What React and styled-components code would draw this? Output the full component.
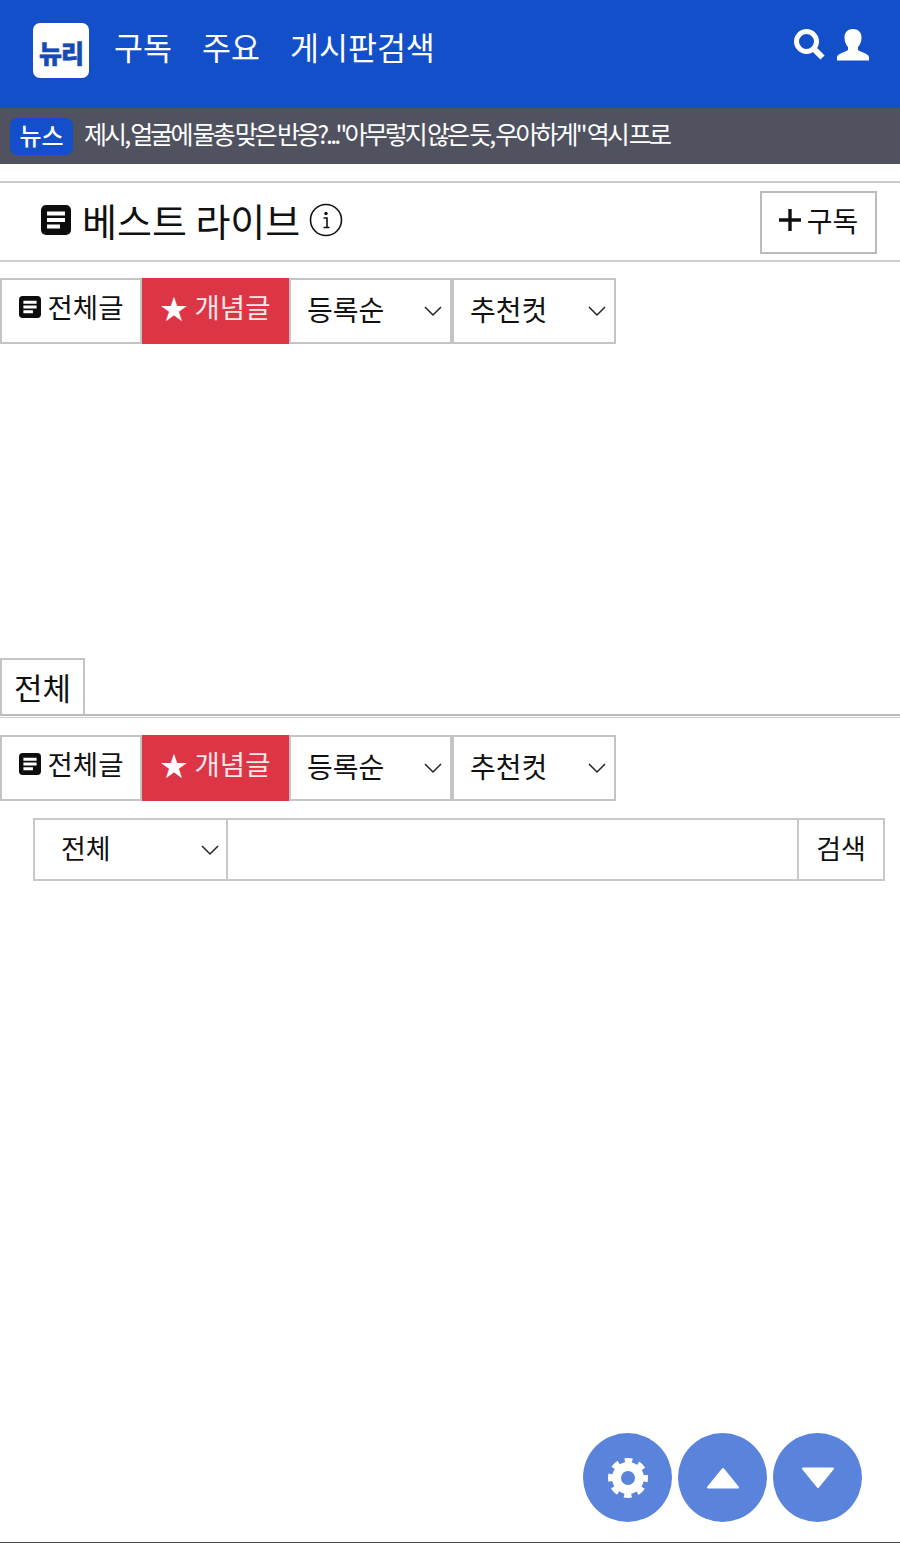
import React from 'react';
import styled, { createGlobalStyle } from 'styled-components';

const GlobalStyle = createGlobalStyle`
  html, body {
    margin: 0;
    padding: 0;
    background: #fff;
  }
  * {
    box-sizing: border-box;
  }
  body {
    font-family: "Noto Sans CJK KR", "Noto Sans", sans-serif;
    color: #111;
  }
`;

const ListIcon = ({ size }) => (
  <svg width={size} height={size} viewBox="0 0 30 30" style={{ flexShrink: 0 }}>
    <rect width="30" height="30" rx="5" fill="#0d0d0d" />
    <path d="M6 6.500h18v4H6zM6 13h18v4H6zM6 19.500h13v4H6z" fill="#fff" />
  </svg>
);

const Chevron = () => (
  <svg width="20" height="12" viewBox="0 0 20 12">
    <path d="M2 2l8 8 8-8" fill="none" stroke="#222" strokeWidth="1.500" />
  </svg>
);

const GearIcon = () => (
  <svg width="42" height="42" viewBox="0 0 42 42">
    <circle cx="21" cy="21" r="11.500" fill="none" stroke="#fff" strokeWidth="9" />
    <circle
      cx="21"
      cy="21"
      r="17.500"
      fill="none"
      stroke="#fff"
      strokeWidth="5"
      strokeDasharray="7.500 6.244"
      strokeDashoffset="3.750"
    />
  </svg>
);

const Tabs = () => (
  <TabRow>
    <TabButton>
      <ListIcon size={22} />
      전체글
    </TabButton>
    <TabButton $active>
      <Star>★</Star>
      개념글
    </TabButton>
    <SelectBox $width={163}>
      <SelectLabel>등록순</SelectLabel>
      <Chevron />
    </SelectBox>
    <SelectBox $width={164}>
      <SelectLabel>추천컷</SelectLabel>
      <Chevron />
    </SelectBox>
  </TabRow>
);

const App = () => (
  <Page>
    <GlobalStyle />
    <Header>
      <Logo>뉴리</Logo>
      <Nav>
        <NavLink>구독</NavLink>
        <NavLink>주요</NavLink>
        <NavLink>게시판검색</NavLink>
      </Nav>
      <HeaderIcons>
        <svg width="32" height="31" viewBox="0 0 32 31">
          <circle cx="12.500" cy="12.500" r="10" fill="none" stroke="#fff" strokeWidth="5" />
          <path d="M19.500 19.500l9 9" stroke="#fff" strokeWidth="6" />
        </svg>
        <svg width="32" height="32" viewBox="0 0 32 32">
          <path
            d="M16 0c5 0 8.500 3 8.500 8.500 0 4-1.500 7.500-3.500 9.500v3c2.500 2 10.500 3.500 11 7v3.500H0V28c.5-3.500 8.500-5 11-7v-3c-2-2-3.500-5.500-3.500-9.500C7.500 3 11 0 16 0z"
            fill="#fff"
          />
        </svg>
      </HeaderIcons>
    </Header>
    <NewsBar>
      <NewsBadge>뉴스</NewsBadge>
      <NewsText>제시, 얼굴에 물총 맞은 반응?..."아무렇지 않은 듯, 우아하게" 역시 프로</NewsText>
    </NewsBar>
    <TitleRow>
      <Title>
        <ListIcon size={30} />
        <TitleText>베스트 라이브</TitleText>
        <svg width="34" height="34" viewBox="0 0 34 34">
          <circle cx="17" cy="17" r="15.500" fill="none" stroke="#111" strokeWidth="1.600" />
          <circle cx="17" cy="10.500" r="1.700" fill="#111" />
          <path d="M14.500 15h3.500v9M14.500 24.500h6" fill="none" stroke="#111" strokeWidth="1.600" />
        </svg>
      </Title>
      <SubscribeButton>
        <svg width="22" height="22" viewBox="0 0 22 22">
          <path d="M11 0v22M0 11h22" stroke="#111" strokeWidth="3.400" />
        </svg>
        구독
      </SubscribeButton>
    </TitleRow>
    <Tabs />
    <BlankArea />
    <CategoryRow>
      <CategoryTab>전체</CategoryTab>
    </CategoryRow>
    <Tabs />
    <SearchRow>
      <SearchSelect>
        <SelectLabel>전체</SelectLabel>
        <Chevron />
      </SearchSelect>
      <SearchInput />
      <SearchButton>검색</SearchButton>
    </SearchRow>
    <FloatingButtons>
      <RoundButton>
        <GearIcon />
      </RoundButton>
      <RoundButton>
        <svg width="34" height="22" viewBox="0 0 34 22">
          <path d="M17 2L32 20.500H2z" fill="#fff" stroke="#fff" strokeWidth="2" strokeLinejoin="round" />
        </svg>
      </RoundButton>
      <RoundButton>
        <svg width="34" height="22" viewBox="0 0 34 22">
          <path d="M17 20L32 1.500H2z" fill="#fff" stroke="#fff" strokeWidth="2" strokeLinejoin="round" />
        </svg>
      </RoundButton>
    </FloatingButtons>
  </Page>
);

const Page = styled.div`
  position: relative;
  display: flex;
  flex-direction: column;
  width: 900px;
  height: 1543px;
  overflow: hidden;
  border-bottom: 1px solid #444;
`;

const Header = styled.header`
  display: flex;
  align-items: center;
  height: 108px;
  padding: 0 31px 7px 33px;
  background: #134fc9;
`;

const Logo = styled.div`
  display: flex;
  align-items: center;
  justify-content: center;
  width: 56px;
  height: 55px;
  padding-top: 2px;
  border-radius: 7px;
  background: #fff;
  color: #164ab5;
  font-size: 25px;
  font-weight: 900;
  letter-spacing: -1px;
  -webkit-text-stroke: 0.5px #164ab5;
`;

const Nav = styled.nav`
  display: flex;
  gap: 30px;
  margin: -9px 0 0 25px;
`;

const NavLink = styled.span`
  color: #fff;
  font-size: 31.500px;
  font-weight: 400;
  line-height: 40px;
  white-space: nowrap;
`;

const HeaderIcons = styled.div`
  display: flex;
  gap: 11px;
  align-items: center;
  margin-left: auto;
  margin-top: -12px;
`;

const NewsBar = styled.div`
  display: flex;
  align-items: center;
  height: 56px;
  padding-left: 10px;
  background: #50535f;
`;

const NewsBadge = styled.span`
  display: flex;
  align-items: center;
  justify-content: center;
  width: 63px;
  height: 37px;
  padding-bottom: 4px;
  border-radius: 7px;
  background: #134fc9;
  color: #fff;
  font-size: 24px;
  font-weight: 500;
`;

const NewsText = styled.span`
  margin: -7px 0 0 11px;
  color: #fff;
  font-size: 25px;
  font-weight: 400;
  letter-spacing: -2.900px;
  word-spacing: -0.700px;
  white-space: nowrap;
`;

const TitleRow = styled.div`
  display: flex;
  align-items: center;
  justify-content: space-between;
  height: 81px;
  margin-top: 17px;
  padding: 0 23px 0 41px;
  border-top: 2px solid #ccc;
  border-bottom: 2px solid #ccc;
`;

const Title = styled.div`
  display: flex;
  align-items: center;
  padding-bottom: 4px;
`;

const TitleText = styled.h1`
  margin: 0 9px 0 11px;
  font-size: 38px;
  font-weight: 400;
  line-height: 50px;
  white-space: nowrap;
`;

const SubscribeButton = styled.div`
  display: flex;
  align-items: center;
  justify-content: center;
  gap: 6px;
  width: 117px;
  height: 63px;
  margin-top: 2px;
  padding-bottom: 5px;
  border: 2px solid #bbb;
  font-size: 28px;
`;

const TabRow = styled.div`
  display: flex;
  height: 66px;
  margin-top: 16px;
  flex-shrink: 0;
`;

const TabButton = styled.div`
  display: flex;
  align-items: center;
  justify-content: center;
  gap: 7px;
  width: ${props => (props.$active ? '147px' : '142px')};
  height: 66px;
  padding-bottom: 8px;
  border: 2px solid ${props => (props.$active ? '#dc3545' : '#c4c4c4')};
  background: ${props => (props.$active ? '#dc3545' : '#fff')};
  color: ${props => (props.$active ? '#f5e6e8' : '#111')};
  font-size: 27.500px;
  line-height: 1;
`;

const Star = styled.span`
  color: #fff;
  font-size: 27px;
  line-height: 1;
`;

const SelectBox = styled.div`
  display: flex;
  align-items: center;
  justify-content: space-between;
  width: ${props => props.$width}px;
  height: 66px;
  padding: 0 7px 0 16px;
  border: 2px solid #c4c4c4;
  font-size: 28px;
  line-height: 1;
`;

const SelectLabel = styled.span`
  padding-bottom: 4px;
`;

const BlankArea = styled.div`
  height: 314px;
  flex-shrink: 0;
`;

const CategoryRow = styled.div`
  display: flex;
  height: 58px;
  margin-bottom: 3px;
  border-bottom: 2px solid #bbb;
  box-shadow: 0 1px 0 #fff, 0 2px 0 #ccc;
  flex-shrink: 0;
`;

const CategoryTab = styled.div`
  display: flex;
  align-items: center;
  justify-content: center;
  width: 85px;
  height: 56px;
  padding-bottom: 2px;
  border: 2px solid #c4c4c4;
  border-bottom: 0;
  font-size: 31px;
  line-height: 1;
`;

const SearchRow = styled.div`
  display: flex;
  height: 63px;
  margin: 17px 15px 0 33px;
  flex-shrink: 0;
  border: 2px solid #c8c8c8;
`;

const SearchSelect = styled.div`
  display: flex;
  align-items: center;
  justify-content: space-between;
  width: 193px;
  padding: 0 6px 0 26px;
  border-right: 2px solid #c8c8c8;
  font-size: 27px;
  line-height: 1;
`;

const SearchInput = styled.div`
  flex: 1;
`;

const SearchButton = styled.div`
  display: flex;
  align-items: center;
  justify-content: center;
  width: 86px;
  padding-bottom: 5px;
  border-left: 2px solid #c8c8c8;
  font-size: 27px;
  line-height: 1;
`;

const FloatingButtons = styled.div`
  position: absolute;
  right: 38px;
  bottom: 20px;
  display: flex;
  gap: 6px;
`;

const RoundButton = styled.div`
  display: flex;
  align-items: center;
  justify-content: center;
  width: 89px;
  height: 89px;
  border-radius: 50%;
  background: #5a83dc;
  color: #fff;
`;

export default App;
